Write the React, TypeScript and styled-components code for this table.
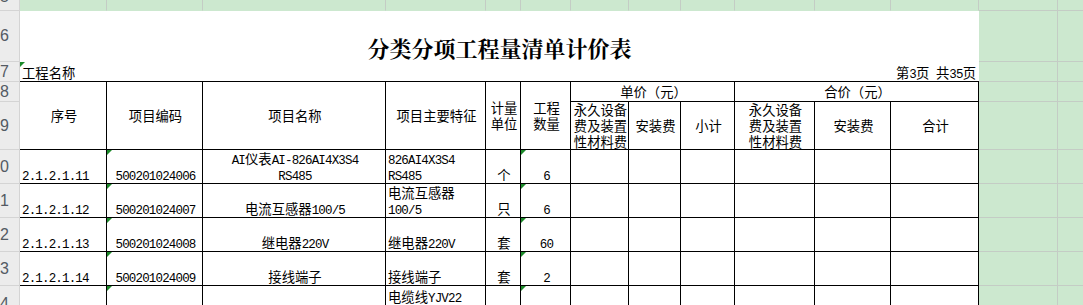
import React from 'react';
import styled, { createGlobalStyle, css } from 'styled-components';

const GREEN = '#cce8cf';
const GRID = '#c4ccc5';
const HEAD = '#ececec';
const HEAD_LINE = '#d4d4d4';

const GlobalStyle = createGlobalStyle`
  html, body {
    margin: 0;
    padding: 0;
    background: #fff;
    overflow: hidden;
  }
`;

const Sheet = styled.div`
  display: grid;
  grid-template-columns: 20px 87px 96px 183px 100px 35px 50px 58px 52px 54px 80px 76px 88px 79px 80px;
  grid-template-rows: 27px 51px 20px 20px 48px 34px 34px 34px 34px 36px;
  width: 1138px;
  margin-top: -16px;
  font-family: "Noto Sans CJK SC", sans-serif;
  font-size: 13.33px;
  line-height: 16px;
  color: #000;
`;

const RowHead = styled.div`
  box-sizing: border-box;
  display: flex;
  align-items: center;
  overflow: hidden;
  background: ${HEAD};
  border-right: 1px solid ${HEAD_LINE};
  border-bottom: 1px solid ${HEAD_LINE};
  font-family: "Liberation Sans", Arial, sans-serif;
  font-size: 16px;
  color: #535a63;
`;

const Spare = styled.div<{ $open?: boolean }>`
  box-sizing: border-box;
  background: ${GREEN};
  border-right: 1px solid ${GRID};
  border-bottom: 1px solid ${(p) => (p.$open ? GREEN : GRID)};
`;

// small green "number stored as text" marker in the top-left corner
const flagMark = css`
  &::before {
    content: '';
    position: absolute;
    left: 0;
    top: 0;
    border-top: 5px solid #1c8a2a;
    border-right: 5px solid transparent;
  }
`;

type Align = 'left' | 'center' | 'right';
type VAlign = 'center' | 'end';

const Cell = styled.div<{ $h?: Align; $v?: VAlign; $span?: number; $rows?: number; $flag?: boolean }>`
  position: relative;
  box-sizing: border-box;
  display: flex;
  flex-direction: column;
  justify-content: ${(p) => (p.$v === 'center' ? 'center' : 'flex-end')};
  grid-column: span ${(p) => p.$span ?? 1};
  grid-row: span ${(p) => p.$rows ?? 1};
  padding: 0 0 0 2px;
  overflow: hidden;
  text-align: ${(p) => p.$h ?? 'left'};
  border-right: 1px solid #000;
  border-bottom: 1px solid #000;
  ${(p) => p.$flag && flagMark}
`;

const Note = styled.div<{ $h?: Align; $flag?: boolean }>`
  position: relative;
  box-sizing: border-box;
  display: flex;
  flex-direction: column;
  justify-content: flex-end;
  grid-column: span 6;
  padding: 0 3px 0 2px;
  text-align: ${(p) => p.$h ?? 'left'};
  border-bottom: 1px solid #000;
  ${(p) => p.$flag && flagMark}
`;

const Caption = styled.div`
  display: flex;
  align-items: flex-end;
  justify-content: center;
  grid-column: span 12;
  padding-bottom: 3px;
  font-family: "Noto Serif CJK SC", "Noto Sans CJK SC", serif;
  font-size: 22px;
  font-weight: 700;
  line-height: 22px;
`;

const Text = styled.div`
  white-space: pre-line;
`;

const Latin = styled.span`
  font-family: "Liberation Mono", monospace;
  font-size: 12.5px;
  letter-spacing: -0.83px;
  line-height: 0;
`;

const mix = (text: string) =>
  text
    .split(/([\x20-\x7e]+)/)
    .filter((part) => part !== '')
    .map((part, i) => (/^[\x20-\x7e]+$/.test(part) ? <Latin key={i}>{part}</Latin> : part));

type BoxProps = React.ComponentProps<typeof Cell> & { text?: string };

const Box = ({ text = '', ...rest }: BoxProps) => (
  <Cell {...rest}>
    <Text>{mix(text)}</Text>
  </Cell>
);

const items = [
  { no: '2.1.2.1.11', code: '500201024006', name: 'AI仪表AI-826AI4X3S4\nRS485', spec: '826AI4X3S4\nRS485', unit: '个', qty: '6' },
  { no: '2.1.2.1.12', code: '500201024007', name: '电流互感器100/5', spec: '电流互感器\n100/5', unit: '只', qty: '6' },
  { no: '2.1.2.1.13', code: '500201024008', name: '继电器220V', spec: '继电器220V', unit: '套', qty: '60' },
  { no: '2.1.2.1.14', code: '500201024009', name: '接线端子', spec: '接线端子', unit: '套', qty: '2' },
  { no: '', code: '', name: '', spec: '电缆线YJV22\n4×2.5', unit: '', qty: '' },
];

const rowNumbers = ['0', '1', '2', '3', '4'];
const costCols = 6;

const Margin = () => (
  <>
    <Spare />
    <Spare />
  </>
);

export default function App() {
  return (
    <>
      <GlobalStyle />
      <Sheet>
        <RowHead>5</RowHead>
        {Array.from({ length: 12 }).map((_, i) => (
          <Spare key={i} $open />
        ))}
        <Margin />

        <RowHead>6</RowHead>
        <Caption>分类分项工程量清单计价表</Caption>
        <Margin />

        <RowHead>7</RowHead>
        <Note $flag>
          <Text>工程名称</Text>
        </Note>
        <Note $h="right">
          <Text>{mix('第3页 共35页')}</Text>
        </Note>
        <Margin />

        <RowHead>8</RowHead>
        <Box $rows={2} $h="center" $v="center" text="序号" />
        <Box $rows={2} $h="center" $v="center" text="项目编码" />
        <Box $rows={2} $h="center" $v="center" text="项目名称" />
        <Box $rows={2} $h="center" $v="center" text="项目主要特征" />
        <Box $rows={2} $h="center" $v="center" text={'计量\n单位'} />
        <Box $rows={2} $h="center" $v="center" text={'工程\n数量'} />
        <Box $span={3} $h="center" $v="center" text="单价（元）" />
        <Box $span={3} $h="center" $v="center" text="合价（元）" />
        <Margin />

        <RowHead>9</RowHead>
        <Box $h="center" $v="center" text={'永久设备\n费及装置\n性材料费'} />
        <Box $h="center" $v="center" text="安装费" />
        <Box $h="center" $v="center" text="小计" />
        <Box $h="center" $v="center" text={'永久设备\n费及装置\n性材料费'} />
        <Box $h="center" $v="center" text="安装费" />
        <Box $h="center" $v="center" text="合计" />
        <Margin />

        {items.map((item, r) => (
          <React.Fragment key={r}>
            <RowHead>{rowNumbers[r]}</RowHead>
            <Box text={item.no} />
            <Box $h="center" $flag text={item.code} />
            <Box $h="center" text={item.name} />
            <Box text={item.spec} />
            <Box $h="center" text={item.unit} />
            <Box $h="center" $flag text={item.qty} />
            {Array.from({ length: costCols }).map((_, c) => (
              <Box key={c} />
            ))}
            <Margin />
          </React.Fragment>
        ))}
      </Sheet>
    </>
  );
}
